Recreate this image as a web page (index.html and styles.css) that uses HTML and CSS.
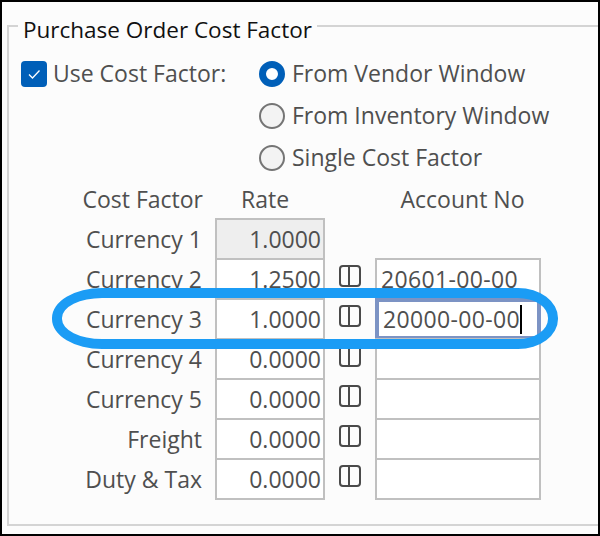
FILE: index.html
```html
<!DOCTYPE html>
<html lang="en">
<head>
<meta charset="utf-8">
<title>Purchase Order Cost Factor</title>
<link rel="stylesheet" href="styles.css">
</head>
<body>
<main class="frame">
  <fieldset class="group">
    <legend class="group-title">Purchase Order Cost Factor</legend>
    <div class="options">
      <div class="use-factor">
        <span class="checkbox"><svg width="26" height="26" viewBox="0 0 26 26"><path d="M8 13.500l3.500 3.500 7-7.500" fill="none" stroke="#fff" stroke-width="1.300"/></svg></span>
        <span class="label">Use Cost Factor:</span>
      </div>
      <div class="radios">
        <div class="radio-row"><span class="radio radio-on"></span><span class="label">From Vendor Window</span></div>
        <div class="radio-row"><span class="radio"></span><span class="label">From Inventory Window</span></div>
        <div class="radio-row"><span class="radio"></span><span class="label">Single Cost Factor</span></div>
      </div>
    </div>
    <div class="table">
      <div class="head head-name">Cost Factor</div>
      <div class="head head-rate">Rate</div>
      <div></div>
      <div class="head head-account">Account No</div>

      <div class="name">Currency 1</div>
      <div class="field rate field-off">1.0000</div>
      <div></div>
      <div></div>

      <div class="name">Currency 2</div>
      <div class="field rate">1.2500</div>
      <div class="icon-cell"><svg class="icon" viewBox="0 0 24 24"><use href="#split"/></svg></div>
      <div class="field account">20601-00-00</div>

      <div class="name">Currency 3</div>
      <div class="field rate">1.0000</div>
      <div class="icon-cell"><svg class="icon" viewBox="0 0 24 24"><use href="#split"/></svg></div>
      <div class="field account field-focus">20000-00-00<span class="caret"></span></div>

      <div class="name">Currency 4</div>
      <div class="field rate">0.0000</div>
      <div class="icon-cell"><svg class="icon" viewBox="0 0 24 24"><use href="#split"/></svg></div>
      <div class="field account"></div>

      <div class="name">Currency 5</div>
      <div class="field rate">0.0000</div>
      <div class="icon-cell"><svg class="icon" viewBox="0 0 24 24"><use href="#split"/></svg></div>
      <div class="field account"></div>

      <div class="name">Freight</div>
      <div class="field rate">0.0000</div>
      <div class="icon-cell"><svg class="icon" viewBox="0 0 24 24"><use href="#split"/></svg></div>
      <div class="field account"></div>

      <div class="name">Duty &amp; Tax</div>
      <div class="field rate">0.0000</div>
      <div class="icon-cell"><svg class="icon" viewBox="0 0 24 24"><use href="#split"/></svg></div>
      <div class="field account"></div>
    </div>
  </fieldset>
  <div class="highlight"></div>
  <svg class="defs" width="0" height="0"><defs><g id="split" fill="none" stroke="#4a4a4a" stroke-width="2"><rect x="2" y="2" width="20" height="20" rx="3"/><path d="M11 2v20"/></g></defs></svg>
</main>
</body>
</html>
```
FILE: styles.css
```css
* { box-sizing: border-box; }
html, body { margin: 0; padding: 0; }
body { width: 600px; height: 536px; overflow: hidden; font-family: "Open Sans", "Noto Sans", sans-serif; font-size: 23px; color: #4f4f4f; }
.frame { position: relative; width: 600px; height: 536px; background: #fcfcfc; border: 2px solid #000; padding: 6px 0 8px 5px; }
.group { margin: 0; height: 100%; border: solid #d4d4d4; border-width: 2px 0 2px 2px; padding: 0; min-width: 0; }
.group-title { margin-left: 9px; padding: 8px 5px 0; color: #111; font-size: 22.5px; line-height: 28px; }
.options { display: flex; margin-top: 9px; padding-left: 12px; }
.use-factor { display: flex; align-items: center; width: 238px; height: 42px; gap: 6px; align-self: flex-start; }
.checkbox { width: 26px; height: 26px; background: #005fb8; border-radius: 4px; display: block; }
.checkbox svg { display: block; }
.label { padding-bottom: 2px; }
.radios { display: flex; flex-direction: column; }
.radio-row { display: flex; align-items: center; height: 42px; gap: 7px; }
.radio { width: 26px; height: 26px; border-radius: 50%; border: 2px solid #757575; background: #f3f3f3; }
.radio-on { border: 7px solid #005fb8; background: #fff; }
.table { display: grid; grid-template-columns: 206px 110px 50px 166px; grid-template-rows: 38px repeat(7, 40px); margin-top: 1px; }
.head { display: flex; align-items: center; }
.head-name { justify-content: flex-end; padding-right: 12px; }
.head-rate { justify-content: center; padding-right: 10px; }
.head-account { justify-content: center; padding-left: 9px; }
.name { display: flex; align-items: center; justify-content: flex-end; height: 42px; padding-right: 13px; }
.field { height: 42px; border: 2px solid #c0c0c0; background: #fff; display: flex; align-items: center; }
.rate { justify-content: flex-end; padding-right: 2px; }
.account { padding-left: 4px; letter-spacing: 0.35px; }
.field-off { background: #eeeeee; }
.field-focus { border: 4px solid #7c93c4; padding-left: 4px; }
.caret { width: 2px; height: 29px; background: #000; }
.icon-cell { display: flex; justify-content: center; padding-top: 6px; }
.icon { width: 24px; height: 24px; display: block; }
.highlight { position: absolute; left: 50px; top: 286px; width: 506px; height: 61px; border: 10px solid #1b9cf5; border-radius: 50px 40px 40px 50px / 30px; }
.defs { position: absolute; }
```
